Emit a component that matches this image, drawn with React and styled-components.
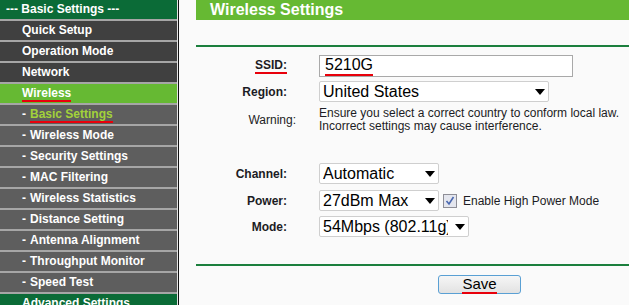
import React from 'react'
import styled, { createGlobalStyle } from 'styled-components'

const GlobalStyle = createGlobalStyle`
  html, body {
    margin: 0;
    padding: 0;
    background: #fafafa;
  }
  body {
    font-family: 'Liberation Sans', Arial, sans-serif;
  }
`

const Page = styled.div`
  display: flex;
  height: 305px;
  overflow: hidden;
  background: #fafafa;
`

const Nav = styled.div`
  width: 177px;
  flex: 0 0 177px;
  display: flex;
  flex-direction: column;
  gap: 2px;
  background: #a6a6a6;
  border-right: 1px solid #e4e4e4;
`

const navColors = {
  group: '#0b6b37',
  section: '#0b6b37',
  top: '#404040',
  active: '#66b933',
  sub: '#5e5e5e',
}

const NavItem = styled.div`
  flex: 0 0 19px;
  height: 19px;
  line-height: 19px;
  padding-left: ${(props) => (props.$variant === 'group' ? '6px' : '22px')};
  background: ${(props) => navColors[props.$variant]};
  color: #fff;
  font-size: 12px;
  font-weight: bold;
  white-space: nowrap;
`

const Dash = styled.span`
  margin-right: 4px;
`

const ActiveText = styled.span`
  color: #a2d23a;
`

const Marked = styled.span`
  display: inline-block;
  line-height: 1;
  padding-bottom: 1px;
  border-bottom: 2px solid #e8000b;
`

const Main = styled.div`
  flex: 1;
  min-width: 0;
  padding-left: 17px;
  border-left: 1px solid #111;
`

const TitleBar = styled.div`
  height: 20px;
  line-height: 20px;
  padding-left: 14px;
  background: #66b933;
  color: #fff;
  font-size: 16px;
  font-weight: bold;
`

const Rule = styled.div`
  margin-top: ${(props) => props.$top}px;
  height: 2px;
  background: #1b7f3d;
`

const Row = styled.div`
  display: grid;
  grid-template-columns: 100px 1fr;
  column-gap: 23px;
  align-items: center;
  margin-top: ${(props) => props.$top}px;
`

const Label = styled.div`
  text-align: right;
  padding-right: ${(props) => (props.$plain ? '0' : '9px')};
  font-size: 12px;
  font-weight: ${(props) => (props.$plain ? 'normal' : 'bold')};
  color: #1c1c24;
`

const TextBox = styled.div`
  box-sizing: border-box;
  width: 254px;
  height: 22px;
  padding: 0 5px;
  display: flex;
  align-items: center;
  background: #fff;
  border: 1px solid #a9a9a9;
  font-size: 16px;
  color: #000;
`

const SelectBox = styled.div`
  box-sizing: border-box;
  width: ${(props) => props.$width}px;
  height: 21px;
  padding: 0 3px;
  display: flex;
  align-items: center;
  gap: 7px;
  background: #fff;
  border: 1px solid #cfcfcf;
  border-radius: 2px;
  font-size: 16px;
  color: #000;
`

const SelectValue = styled.span`
  flex: 1;
  min-width: 0;
  overflow: hidden;
  white-space: nowrap;
`

const Note = styled.div`
  font-size: 12px;
  line-height: 13px;
  color: #1c1c24;
`

const Field = styled.div`
  display: flex;
  align-items: center;
`

const Check = styled.span`
  box-sizing: border-box;
  width: 14px;
  height: 14px;
  margin-left: 4px;
  display: flex;
  align-items: center;
  justify-content: center;
  background: #e4e6ee;
  border: 1px solid #8e8e96;
`

const CheckLabel = styled.span`
  margin-left: 6px;
  font-size: 12px;
  color: #1c1c24;
`

const ButtonRow = styled.div`
  margin-top: 9px;
  padding-left: 242px;
`

const SaveButton = styled.button`
  box-sizing: border-box;
  width: 83px;
  height: 19px;
  padding: 0;
  display: flex;
  align-items: center;
  justify-content: center;
  border: 1px solid #5aa0d4;
  border-radius: 3px;
  background: linear-gradient(#f6f6f6, #e2e2e2);
  font-family: 'Liberation Sans', Arial, sans-serif;
  font-size: 15px;
  color: #000;
`

const Arrow = () => (
  <svg width="10" height="6" viewBox="0 0 10 6">
    <path d="M0 0 H10 L5 6 Z" fill="#000" />
  </svg>
)

const Select = ({ width, value }) => (
  <SelectBox $width={width}>
    <SelectValue>{value}</SelectValue>
    <Arrow />
  </SelectBox>
)

const subItems = [
  'Wireless Mode',
  'Security Settings',
  'MAC Filtering',
  'Wireless Statistics',
  'Distance Setting',
  'Antenna Alignment',
  'Throughput Monitor',
  'Speed Test',
]

export default function App() {
  return (
    <>
      <GlobalStyle />
      <Page>
        <Nav>
          <NavItem $variant="group">--- Basic Settings ---</NavItem>
          <NavItem $variant="top">Quick Setup</NavItem>
          <NavItem $variant="top">Operation Mode</NavItem>
          <NavItem $variant="top">Network</NavItem>
          <NavItem $variant="active">
            <Marked>Wireless</Marked>
          </NavItem>
          <NavItem $variant="sub">
            <Dash>-</Dash>
            <ActiveText>
              <Marked>Basic Settings</Marked>
            </ActiveText>
          </NavItem>
          {subItems.map((item) => (
            <NavItem key={item} $variant="sub">
              <Dash>-</Dash>
              {item}
            </NavItem>
          ))}
          <NavItem $variant="section">Advanced Settings</NavItem>
        </Nav>

        <Main>
          <TitleBar>Wireless Settings</TitleBar>
          <Rule $top={25} />

          <Row $top={8}>
            <Label>
              <Marked>SSID:</Marked>
            </Label>
            <TextBox>
              <Marked>5210G</Marked>
            </TextBox>
          </Row>
          <Row $top={4}>
            <Label>Region:</Label>
            <Select width={230} value="United States" />
          </Row>
          <Row $top={5}>
            <Label $plain>Warning:</Label>
            <Note>
              Ensure you select a correct country to conform local law.
              <br />
              Incorrect settings may cause interference.
            </Note>
          </Row>

          <Row $top={30}>
            <Label>Channel:</Label>
            <Select width={120} value="Automatic" />
          </Row>
          <Row $top={6}>
            <Label>Power:</Label>
            <Field>
              <Select width={120} value="27dBm Max" />
              <Check>
                <svg width="10" height="10" viewBox="0 0 10 10">
                  <path d="M1.5 5 L4 8 L8.5 1" fill="none" stroke="#4a68b0" strokeWidth="1.6" />
                </svg>
              </Check>
              <CheckLabel>Enable High Power Mode</CheckLabel>
            </Field>
          </Row>
          <Row $top={5}>
            <Label>Mode:</Label>
            <Select width={150} value="54Mbps (802.11g)" />
          </Row>

          <Rule $top={27} />
          <ButtonRow>
            <SaveButton>
              <Marked>Save</Marked>
            </SaveButton>
          </ButtonRow>
        </Main>
      </Page>
    </>
  )
}
